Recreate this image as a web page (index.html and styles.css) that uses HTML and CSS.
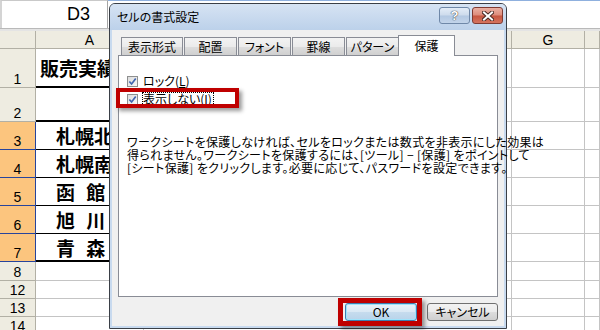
FILE: index.html
```html
<!DOCTYPE html>
<html lang="ja">
<head>
  <meta charset="UTF-8" />
  <title>セルの書式設定</title>
  <link rel="stylesheet" href="styles.css">
</head>
<body>
  <div class="excel">
    <div class="formula-row">
      <div class="name-box">D3</div>
      <div class="formula-bar"></div>
    </div>
    <div class="gap"></div>

    <div class="sheet">
      <div class="hd corner"></div>
      <div class="hd col">A</div>
      <div class="hd col"></div>
      <div class="hd col">G</div>
      <div class="hd col"></div>

      <div class="hd rh">1</div>
      <div class="c a thick title-cell">販売実績</div>
      <div class="c"></div><div class="c"></div><div class="c"></div>

      <div class="hd rh">2</div>
      <div class="c a thick"></div>
      <div class="c"></div><div class="c"></div><div class="c"></div>

      <div class="hd rh sel">3</div>
      <div class="c a thin city">札幌北</div>
      <div class="c"></div><div class="c"></div><div class="c"></div>

      <div class="hd rh sel">4</div>
      <div class="c a thin city">札幌南</div>
      <div class="c"></div><div class="c"></div><div class="c"></div>

      <div class="hd rh sel">5</div>
      <div class="c a thin city">函 館</div>
      <div class="c"></div><div class="c"></div><div class="c"></div>

      <div class="hd rh sel">6</div>
      <div class="c a thin city">旭 川</div>
      <div class="c"></div><div class="c"></div><div class="c"></div>

      <div class="hd rh sel">7</div>
      <div class="c a thick city">青 森</div>
      <div class="c"></div><div class="c"></div><div class="c"></div>

      <div class="hd rh">8</div>
      <div class="c"></div><div class="c"></div><div class="c"></div><div class="c"></div>

      <div class="hd rh">12</div>
      <div class="c"></div><div class="c"></div><div class="c"></div><div class="c"></div>

      <div class="hd rh">13</div>
      <div class="c"></div><div class="c"></div><div class="c"></div><div class="c"></div>

      <div class="hd rh">14</div>
      <div class="c"></div><div class="c"></div><div class="c"></div><div class="c"></div>
    </div>
  </div>

  <div class="dialog">
    <div class="titlebar">
      <div class="title">セルの書式設定</div>
      <div class="cap-btns">
        <div class="cap-btn help">?</div>
        <div class="cap-btn close">
          <svg width="12" height="10" viewBox="0 0 12 10">
            <path d="M2 1.5 L10 8.5 M10 1.5 L2 8.5" stroke="#4a2a26" stroke-width="4" stroke-linecap="square"/>
            <path d="M2 1.5 L10 8.5 M10 1.5 L2 8.5" stroke="#fff" stroke-width="2" stroke-linecap="square"/>
          </svg>
        </div>
      </div>
    </div>

    <div class="client">
      <div class="tabs">
        <div class="tab wide">表示形式</div>
        <div class="tab">配置</div>
        <div class="tab">フォント</div>
        <div class="tab">罫線</div>
        <div class="tab">パターン</div>
        <div class="tab active">保護</div>
      </div>

      <div class="panel">
        <div class="check-row">
          <span class="checkbox">
            <svg width="9" height="9" viewBox="0 0 10 10"><path d="M1.5 5 L4 7.8 L8.6 1.6" fill="none" stroke="#4166b0" stroke-width="1.9"/></svg>
          </span>
          <span class="label">ロック(<u>L</u>)</span>
        </div>
        <div class="check-row">
          <span class="checkbox">
            <svg width="9" height="9" viewBox="0 0 10 10"><path d="M1.5 5 L4 7.8 L8.6 1.6" fill="none" stroke="#4166b0" stroke-width="1.9"/></svg>
          </span>
          <span class="label focus">表示しない(<u>I</u>)</span>
        </div>

        <p class="desc">ワークシートを保護しなければ、セルをロックまたは数式を非表示にした効果は<br>得られません。ワークシートを保護するには、[ツール] − [保護] をポイントして<br>[シート保護] をクリックします。必要に応じて、パスワードを設定できます。</p>
      </div>

      <div class="buttons">
        <div class="btn default">OK</div>
        <div class="btn">キャンセル</div>
      </div>
    </div>
  </div>

  <div class="mark mark-check"></div>
  <div class="mark mark-ok"></div>
</body>
</html>
```

FILE: styles.css
```css
html, body {
  margin: 0;
}

body {
  width: 600px;
  height: 330px;
  overflow: hidden;
  position: relative;
  background-color: white;
  font-family: "Liberation Sans", Arial, sans-serif;
  color: black;
}

/* spreadsheet */
.formula-row {
  display: flex;
  height: 28px;
}

.name-box {
  width: 108px;
  box-sizing: border-box;
  border-top: 1px solid #c9c9c9;
  border-left: 2px solid #d4d4d4;
  border-right: 1px solid #a5a5a5;
  padding-left: 65px;
  font-size: 18px;
  line-height: 27px;
}

.formula-bar {
  flex: 1;
  border-top: 1px solid #8fb0de;
}

.gap {
  height: 2px;
  background-color: #e4e4e4;
  border-top: 1px solid #b9b9b9;
}

.sheet {
  display: grid;
  grid-template-columns: 36px 108px 368px 73px 1fr;
  grid-template-rows: 18px 39px 34px 28px 28px 28px 28px 28px 19px 18px 18px 18px;
}

.sheet > div {
  box-sizing: border-box;
  border-right: 1px solid #c4c4c4;
  border-bottom: 1px solid #c4c4c4;
}

.hd {
  background-color: #eeece1;
  font-size: 14px;
  display: flex;
  justify-content: center;
  align-items: center;
  line-height: 14px;
}

.sheet > .hd {
  border-color: #b2b0a5;
}

.rh {
  align-items: flex-end;
  padding-bottom: 1px;
}

.sheet > .sel {
  background-color: #fcc57e;
  border-right-color: #27449c;
  border-bottom-color: #27449c;
}

.a {
  display: flex;
  align-items: center;
  font-family: "Noto Sans CJK JP", sans-serif;
  font-weight: bold;
  font-size: 19px;
  white-space: nowrap;
  overflow: hidden;
}

.sheet > .thick {
  border-bottom: 2px solid black;
}

.sheet > .thin {
  border-bottom: 1px solid black;
}

.title-cell {
  padding-left: 4px;
}

.city {
  padding-left: 20px;
  word-spacing: 7px;
}

/* dialog */
.dialog {
  position: absolute;
  left: 109px;
  top: 3px;
  width: 398px;
  height: 326px;
  box-sizing: border-box;
  border: 1px solid #3a3f46;
  border-radius: 6px 6px 0 0;
  background-color: #c8daef;
  display: flex;
  flex-direction: column;
  font-family: "Noto Sans CJK JP", sans-serif;
  font-size: 12px;
  font-feature-settings: "palt";
}

.titlebar {
  height: 26px;
  display: flex;
  align-items: flex-start;
  background: linear-gradient(#d6e3f3, #bcd1ea);
  border-radius: 5px 5px 0 0;
}

.title {
  flex: 1;
  padding: 5px 0 0 7px;
  line-height: 16px;
}

.cap-btns {
  display: flex;
  gap: 2px;
  margin: 3px 3px 0 0;
}

.cap-btn {
  width: 31px;
  height: 17px;
  box-sizing: border-box;
  border-radius: 3px;
  display: flex;
  justify-content: center;
  align-items: center;
}

.help {
  border: 1px solid #6f88a8;
  background: linear-gradient(#e3ecf7 0%, #cddbec 48%, #b3c8e2 52%, #c2d4ea 100%);
  font-family: "Liberation Sans", Arial, sans-serif;
  font-weight: bold;
  font-size: 13px;
  color: white;
  text-shadow: 0 0 1px #333, 0 0 1px #333;
}

.close {
  border: 1px solid #7f3b33;
  background: linear-gradient(#eab0a3 0%, #dd8b7b 48%, #c65540 52%, #d5735e 100%);
}

.client {
  flex: 1;
  margin: 0 2px 2px;
  background-color: #f0f0f0;
  padding: 5px 6px 0;
  display: flex;
  flex-direction: column;
}

.tabs {
  display: flex;
  align-items: flex-end;
  height: 20px;
  padding-left: 3px;
  gap: 1px;
}

.tab {
  width: 53px;
  height: 18px;
  box-sizing: border-box;
  border: 1px solid #898c95;
  border-bottom: none;
  background: linear-gradient(#f3f3f3 0%, #ebebeb 50%, #dddddd 51%, #d0d0d0 100%);
  text-align: center;
  line-height: 18px;
  white-space: nowrap;
}

.tab.wide {
  width: 62px;
}

.tab.active {
  width: 57px;
  height: 21px;
  margin: 0 -2px -1px;
  background: white;
  position: relative;
  z-index: 1;
  line-height: 19px;
}

.panel {
  height: 242px;
  box-sizing: border-box;
  border: 1px solid #898c95;
  background-color: white;
  padding: 17px 0 0 8px;
}

.check-row {
  display: flex;
  align-items: center;
  gap: 4px;
  height: 16px;
  margin-bottom: 2px;
}

.checkbox {
  width: 11px;
  height: 11px;
  box-sizing: border-box;
  border: 1px solid #8e8f8f;
  background: linear-gradient(135deg, #dcdcdc, #f8f8f8);
  display: flex;
  justify-content: center;
  align-items: center;
}

.label {
  border: 1px dotted transparent;
  padding: 0 1px 0 0;
  line-height: 12px;
}

.label.focus {
  border-color: black;
}

.desc {
  margin: 28px 0 0;
  line-height: 13px;
  letter-spacing: 0.35px;
  white-space: nowrap;
}

.buttons {
  display: flex;
  justify-content: flex-end;
  gap: 10px;
  margin-top: 6px;
}

.btn {
  width: 71px;
  height: 18px;
  box-sizing: border-box;
  border: 1px solid #707070;
  border-radius: 3px;
  background: linear-gradient(#f2f2f2 0%, #ebebeb 49%, #dddddd 50%, #cfcfcf 100%);
  text-align: center;
  line-height: 16px;
}

.btn.default {
  width: 72px;
  border-color: #3c7fb1;
  background: linear-gradient(#eaf3fa 0%, #d9e8f4 49%, #c6dcee 50%, #b9d3ea 100%);
  box-shadow: inset 0 0 0 1px #9fe3fb;
}

/* red highlight marks */
.mark {
  position: absolute;
  box-sizing: border-box;
  border: 4px solid #bf0000;
  box-shadow: 3px 3px 4px rgba(0, 0, 0, 0.4);
}

.mark-check {
  left: 116px;
  top: 88px;
  width: 123px;
  height: 20px;
}

.mark-ok {
  left: 338px;
  top: 298px;
  width: 84px;
  height: 28px;
  border-width: 5px;
}
```
